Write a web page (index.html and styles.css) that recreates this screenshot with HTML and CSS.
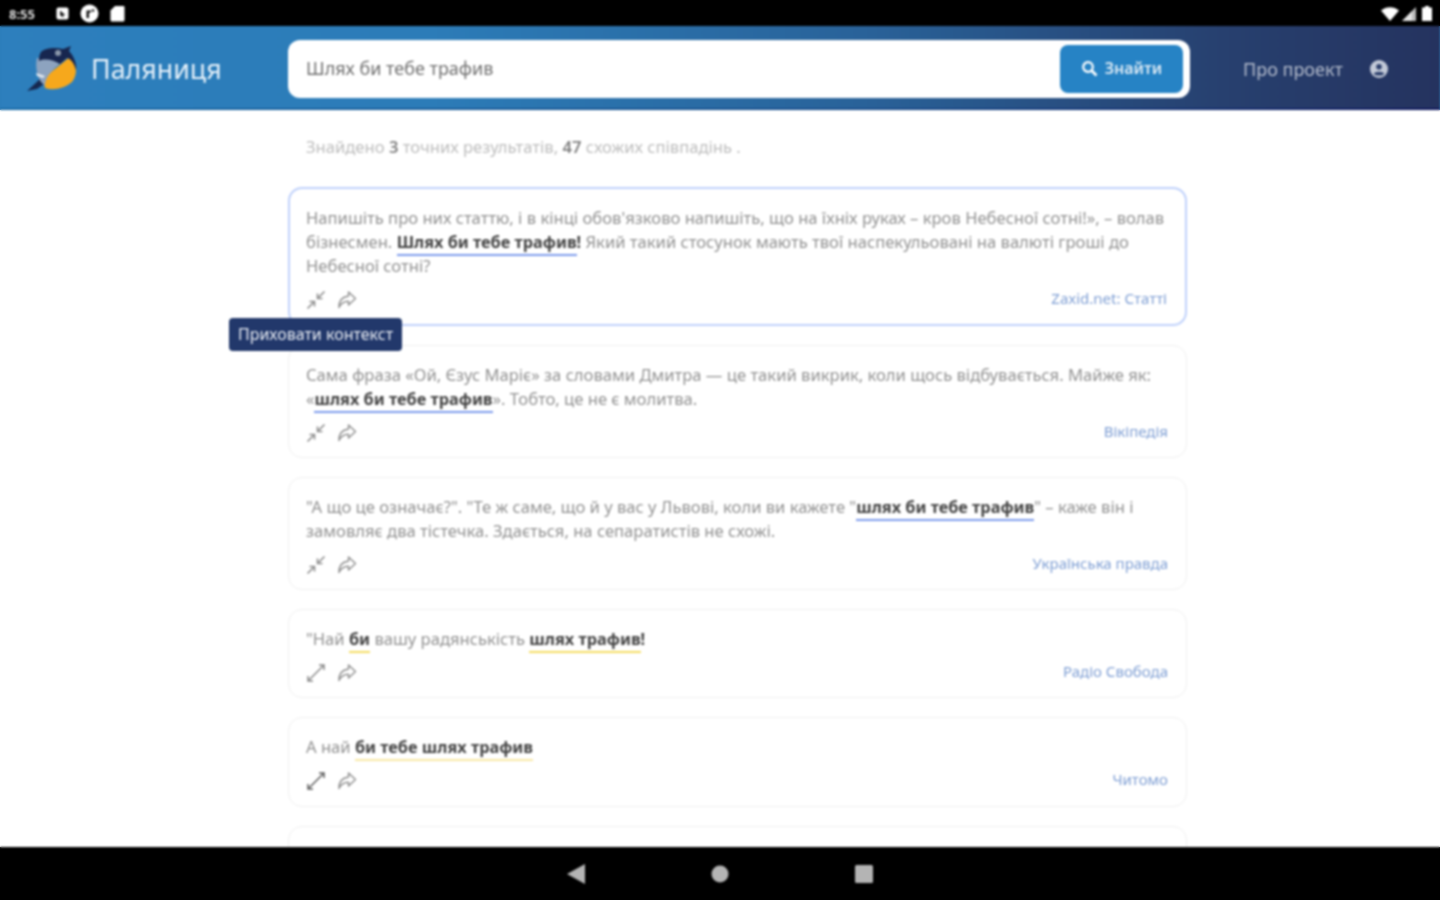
FILE: index.html
```html
<!DOCTYPE html>
<html lang="uk">
<head>
<meta charset="utf-8">
<title>Паляниця</title>
<link rel="stylesheet" href="styles.css">
</head>
<body>
<svg class="defs" width="0" height="0">
  <symbol id="i-shrink" viewBox="0 0 20 20"><path d="M1.500 18.500 8 12M3.500 11.500H8.500V16.500M18.500 1.500 12 8M11.500 3.500V8.500H16.500" fill="none" stroke="currentColor" stroke-width="1.600"/></symbol>
  <symbol id="i-expand" viewBox="0 0 20 20"><path d="M2 18 18 2M2 13V18H7M13 2H18V7" fill="none" stroke="currentColor" stroke-width="1.500"/></symbol>
  <symbol id="i-share" viewBox="0 0 20 20"><path d="M11.500 2 18.500 8.500 11.500 15V11.200C7.500 11.200 4 13 2 17.500 1.800 11 5.500 6.800 11.500 6Z" fill="none" stroke="currentColor" stroke-width="1.400" stroke-linejoin="round"/></symbol>
</svg>
<div class="status">
  <div class="status-left">
    <span class="clock">8:55</span>
    <svg class="st-ic" width="13" height="13" viewBox="0 0 13 13"><rect x="0.500" y="0.500" width="12" height="12" rx="2" fill="#fff"/><path d="M4 3.500 9.500 8 7 8.200 8 10.500 4 8.500Z" fill="#222"/></svg>
    <svg class="st-ic" width="19" height="19" viewBox="0 0 19 19"><circle cx="9.500" cy="9.500" r="9" fill="#fff"/><path d="M6.500 14V6.500H11V8.500H9V14Z" fill="#111"/><circle cx="13" cy="6.500" r="1.300" fill="#111"/></svg>
    <svg class="st-ic" width="15" height="17" viewBox="0 0 15 17"><path d="M5 1H13.500A1 1 0 0 1 14.500 2V15A1.500 1.500 0 0 1 13 16.500H2A1.500 1.500 0 0 1 .5 15V5.500Z" fill="#fff"/></svg>
  </div>
  <div class="status-right">
    <svg width="18" height="14" viewBox="0 0 18 14"><path d="M0 3.500C5-1 13-1 18 3.500L9 14Z" fill="#fff"/></svg>
    <svg class="st-signal" width="14" height="14" viewBox="0 0 14 14"><path d="M14 0V14H0Z" fill="#bbb"/><path d="M10 4V14H0Z" fill="#fff" opacity=".6"/></svg>
    <svg width="10" height="15" viewBox="0 0 10 15"><path d="M3 0H7V1.500H10V15H0V1.500H3Z" fill="#fff"/></svg>
  </div>
</div>
<header class="topbar">
  <div class="brand">
    <svg class="logo" width="52" height="46" viewBox="0 0 52 46">
      <path d="M0 45 13 33 20 36 10 43Z" fill="#16284f"/>
      <path d="M18 42C16 35 21 28 28 23L44 10C51 20 50 30 45 36 38 42 27 45 18 42Z" fill="#f6a81c"/>
      <path d="M10 12 38 13 27 23C22 28 18 33 18 40L14 36C10 30 8 20 10 12Z" fill="#8da3bf"/>
      <path d="M14 6C18 2 28 1 36 3L44 0 42 5C47 10 50 18 49 24 47 17 44 13 40 12L33 18C27 14 18 12 12 15 12 12 12 9 14 6Z" fill="#17264f"/>
      <circle cx="31" cy="7" r="3" fill="#8b98ab"/>
      <path d="M9 27 18 30 16 32 10 30Z" fill="#e6ebf1"/>
    </svg>
    <span class="brand-name">Паляниця</span>
  </div>
  <div class="searchbox">
    <span class="query">Шлях би тебе трафив</span>
    <button class="search-btn" type="button">
      <svg width="17" height="17" viewBox="0 0 17 17"><circle cx="7" cy="7" r="4.800" fill="none" stroke="#fff" stroke-width="2.200"/><path d="M10.500 10.500 15.500 15.500" stroke="#fff" stroke-width="2.600"/></svg>
      <span>Знайти</span>
    </button>
  </div>
  <nav class="topnav">
    <span class="about">Про проект</span>
    <svg width="18" height="18" viewBox="0 0 18 18"><circle cx="9" cy="9" r="9" fill="#c3cad8"/><circle cx="9" cy="6.800" r="2.800" fill="#2c3f6c"/><path d="M3.800 14C4.500 11 13.500 11 14.200 14 11.500 16 6.500 16 3.800 14Z" fill="#2c3f6c"/></svg>
  </nav>
</header>
<main class="content">
  <div class="column">
    <p class="summary">Знайдено <b>3</b> точних результатів, <b>47</b> схожих співпадінь .</p>

    <article class="card card-active">
      <p class="quote">Напишіть про них статтю, і в кінці обов'язково напишіть, що на їхніх руках – кров Небесної сотні!», – волав бізнесмен. <b class="hit">Шлях би тебе трафив</b><b>!</b> Який такий стосунок мають твої наспекульовані на валюті гроші до Небесної сотні?</p>
      <div class="meta">
        <div class="tools"><svg class="tool"><use href="#i-shrink"/></svg><svg class="tool"><use href="#i-share"/></svg></div>
        <a class="source">Zaxid.net: Статті</a>
      </div>
      <div class="tooltip">Приховати контекст</div>
    </article>

    <article class="card">
      <p class="quote">Сама фраза «Ой, Єзус Маріє» за словами Дмитра — це такий викрик, коли щось відбувається. Майже як: «<b class="hit">шлях би тебе трафив</b>». Тобто, це не є молитва.</p>
      <div class="meta">
        <div class="tools"><svg class="tool"><use href="#i-shrink"/></svg><svg class="tool"><use href="#i-share"/></svg></div>
        <a class="source">Вікіпедія</a>
      </div>
    </article>

    <article class="card">
      <p class="quote">"А що це означає?". "Те ж саме, що й у вас у Львові, коли ви кажете "<b class="hit">шлях би тебе трафив</b>" – каже він і замовляє два тістечка. Здається, на сепаратистів не схожі.</p>
      <div class="meta">
        <div class="tools"><svg class="tool"><use href="#i-shrink"/></svg><svg class="tool"><use href="#i-share"/></svg></div>
        <a class="source">Українська правда</a>
      </div>
    </article>

    <article class="card">
      <p class="quote">"Най <b class="near">би</b> вашу радянськість <b class="near">шлях трафив</b><b>!</b></p>
      <div class="meta">
        <div class="tools"><svg class="tool tool-mid"><use href="#i-expand"/></svg><svg class="tool"><use href="#i-share"/></svg></div>
        <a class="source">Радіо Свобода</a>
      </div>
    </article>

    <article class="card card-tall">
      <p class="quote">А най <b class="near near-soft">би тебе шлях трафив</b></p>
      <div class="meta">
        <div class="tools"><svg class="tool tool-dark"><use href="#i-expand"/></svg><svg class="tool"><use href="#i-share"/></svg></div>
        <a class="source">Читомо</a>
      </div>
    </article>

    <article class="card card-cut"></article>
  </div>
</main>
<footer class="navbar">
  <svg width="18" height="20" viewBox="0 0 18 20"><path d="M18 0V20L0 10Z" fill="#b4b4b4"/></svg>
  <svg width="18" height="18" viewBox="0 0 18 18"><circle cx="9" cy="9" r="8.500" fill="#b4b4b4"/></svg>
  <svg width="18" height="18" viewBox="0 0 18 18"><rect x="0" y="0" width="18" height="18" rx="1.500" fill="#b4b4b4"/></svg>
</footer>
</body>
</html>
```
FILE: styles.css
```css
* { box-sizing: border-box; }
html, body { margin: 0; height: 100%; }
html {
  overflow: hidden;
  background: linear-gradient(180deg, #000 26px, #2c7cb8 26px, #2c7cb8 110px, #fff 110px, #fff 847px, #000 847px);
}
body {
  width: 1440px;
  height: 900px;
  overflow: hidden;
  display: flex;
  flex-direction: column;
  background: #fff;
  font-family: "Noto Sans", "Open Sans", sans-serif;
  color: #9b9b9b;
  filter: blur(0.8px);
}
.defs { display: block; height: 0; }

.status {
  height: 26px;
  flex: none;
  background: #000;
  display: flex;
  justify-content: space-between;
  align-items: center;
  padding: 1px 8px 0 9px;
}
.status-left, .status-right { display: flex; align-items: center; }
.status-left { gap: 11px; }
.status-right { gap: 3px; }
.st-signal { margin-right: 3px; }
.clock { color: #d8d8d8; font-size: 13px; font-weight: 700; width: 31px; margin-right: 5px; }

.topbar {
  height: 84px;
  flex: none;
  display: flex;
  align-items: center;
  padding-top: 4px;
  background: linear-gradient(90deg, #2d7fbd 0%, #2c7cb8 30%, #296299 60%, #27406f 85%, #25335f 100%);
  border-bottom: 2px solid;
  border-image: linear-gradient(90deg, #1a6ca8, #1c4f8c 60%, #10185c) 1;
}
.brand { width: 288px; flex: none; display: flex; align-items: center; padding-left: 27px; gap: 12px; }
.logo { flex: none; }
.brand-name { color: #e6f1fa; font-size: 26.800px; line-height: 36px; }

.searchbox {
  width: 902px;
  height: 58px;
  flex: none;
  background: #fff;
  border-radius: 12px;
  display: flex;
  align-items: center;
  justify-content: space-between;
  padding: 0 7px 0 18px;
}
.query { color: #6f6f6f; font-size: 18px; padding-bottom: 2px; }
.search-btn {
  width: 123px;
  height: 48px;
  border: 0;
  border-radius: 8px;
  background: #2683c5;
  color: #dbe9f4;
  display: flex;
  align-items: center;
  justify-content: center;
  gap: 7px;
  padding: 0 0 2px;
  font: 600 16px "Noto Sans", sans-serif;
}

.topnav { flex: 1; display: flex; align-items: center; padding-left: 53px; gap: 27px; }
.about { color: #b4bccc; font-size: 18px; }

.content { flex: 1; min-height: 0; overflow: hidden; }
.column { width: 899px; margin-left: 288px; display: flex; flex-direction: column; gap: 19px; }
.summary { margin: 25px 0 9px; padding-left: 18px; font-size: 16.600px; line-height: 24px; color: #bdbdbd; }
.summary b { color: #808080; font-weight: 600; }

.card {
  position: relative;
  border: 1px solid #f0f0f0;
  border-radius: 14px;
  padding: 17px 18px 10px 17px;
  background: #fff;
}
.card-active { border: 2px solid #bfd1fb; padding-left: 16px; z-index: 2; }
.card-tall { padding-bottom: 11px; }
.card-cut { height: 60px; flex: none; }
.quote { margin: 0; font-size: 16.600px; line-height: 24px; color: #929292; }
.quote b { color: #444; font-size: 16.300px; }
.hit { border-bottom: 2px solid #7d9bec; padding-bottom: 1px; }
.near { border-bottom: 2px solid #f5dd62; padding-bottom: 1px; }
.near-soft { border-bottom-color: #f9e8a4; }
.meta { display: flex; justify-content: space-between; align-items: center; margin-top: 8px; height: 28px; }
.tools { display: flex; gap: 11px; color: #8f8f8f; }
.tool { width: 20px; height: 20px; }
.tool-mid { color: #8a8a8a; }
.tool-dark { color: #5f5f5f; }
.source { color: #7f9fd4; font-size: 15px; padding-bottom: 4px; }

.tooltip {
  position: absolute;
  left: -61px;
  top: 129px;
  width: 173px;
  height: 33px;
  background: #22386b;
  border-radius: 4px;
  color: #e8ecf3;
  font-size: 16px;
  line-height: 33px;
  text-align: center;
  white-space: nowrap;
}

.navbar {
  height: 53px;
  flex: none;
  background: #000;
  display: flex;
  align-items: center;
  justify-content: center;
  gap: 126px;
}
```
